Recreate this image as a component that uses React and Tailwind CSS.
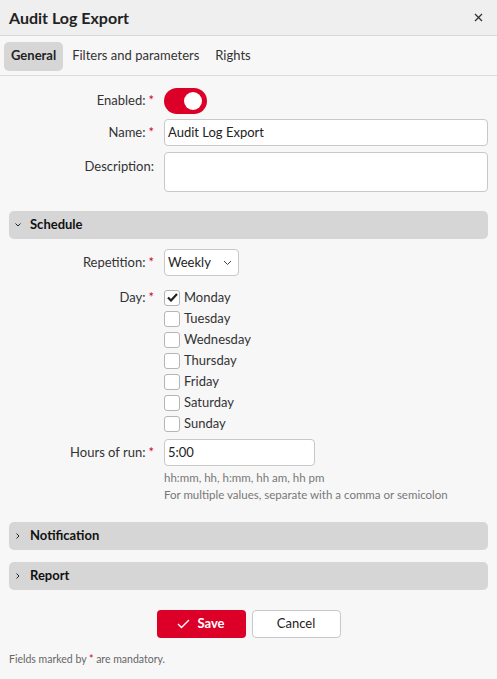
import React, { useState } from 'react'

const days = ['Monday', 'Tuesday', 'Wednesday', 'Thursday', 'Friday', 'Saturday', 'Sunday']

function Label({ text, required }) {
  return (
    <div className="w-[155px] shrink-0 text-right pr-[1px]">
      {text}
      {required && <span className="text-[#d0021b] ml-[3px]">*</span>}
    </div>
  )
}

function Chevron({ open }) {
  return (
    <svg width="8" height="8" viewBox="0 0 8 8" className="text-[#222]">
      {open ? (
        <path d="M1.5 2.5 L4 5 L6.5 2.5" fill="none" stroke="currentColor" strokeWidth="1" />
      ) : (
        <path d="M2.5 1.5 L5 4 L2.5 6.5" fill="none" stroke="currentColor" strokeWidth="1" />
      )}
    </svg>
  )
}

function Section({ title, open }) {
  return (
    <div className="mx-[9px] h-[28px] bg-[#d6d6d6] rounded-[5px] flex items-center pl-[5px] gap-[8px]">
      <Chevron open={open} />
      <span className="font-bold text-[13px] text-[#111]">{title}</span>
    </div>
  )
}

export default function App() {
  const [checked, setChecked] = useState({ Monday: true })

  return (
    <div className="w-[497px] h-[679px] bg-[#f7f7f7] text-[13px] text-[#333] font-['Lato','Liberation_Sans',sans-serif] flex flex-col">
      {/* Header */}
      <div className="h-[36px] bg-[#efefef] border-b border-[#d9d9d9] flex items-center justify-between pl-[9px] pr-[14px]">
        <span className="font-bold text-[16px] text-[#222]">Audit Log Export</span>
        <svg width="9" height="9" viewBox="0 0 9 9">
          <path d="M1 1 L8 8 M8 1 L1 8" stroke="#333" strokeWidth="1.3" />
        </svg>
      </div>

      {/* Tabs */}
      <div className="h-[40px] border-b border-[#dcdcdc] flex items-center pl-[4px] gap-[1px] pt-[1px]">
        <div className="h-[29px] px-[7px] rounded-[5px] bg-[#d6d6d6] flex items-center font-bold text-[#222]">General</div>
        <div className="h-[29px] px-[8px] flex items-center text-[#333]">Filters and parameters</div>
        <div className="h-[29px] px-[7px] flex items-center text-[#333]">Rights</div>
      </div>

      {/* General fields */}
      <div className="flex flex-col gap-[5px] pt-[12px] pr-[9px]">
        <div className="flex items-center gap-[9px]">
          <Label text="Enabled:" required />
          <div className="w-[43px] h-[26px] rounded-full bg-[#dc0028] flex items-center justify-end pr-[5px]">
            <div className="w-[18px] h-[18px] rounded-full bg-white" />
          </div>
        </div>
        <div className="flex items-center gap-[9px]">
          <Label text="Name:" required />
          <div className="flex-1 h-[27px] bg-white border border-[#c8c8c8] rounded-[4px] flex items-center px-[3px] text-[#222]">
            Audit Log Export
          </div>
        </div>
        <div className="flex items-start gap-[9px] pt-[1px]">
          <div className="pt-[5px]"><Label text="Description:" /></div>
          <div className="flex-1 h-[40px] bg-white border border-[#c8c8c8] rounded-[4px]" />
        </div>
      </div>

      {/* Schedule */}
      <div className="mt-[19px]">
        <Section title="Schedule" open />
      </div>

      <div className="flex flex-col pt-[10px] pr-[9px]">
        <div className="flex items-center gap-[9px]">
          <Label text="Repetition:" required />
          <div className="w-[75px] h-[27px] bg-white border border-[#c8c8c8] rounded-[4px] flex items-center justify-between px-[3px] pr-[6px] text-[#222]">
            <span>Weekly</span>
            <svg width="9" height="6" viewBox="0 0 9 6">
              <path d="M1 1 L4.5 4.5 L8 1" fill="none" stroke="#444" strokeWidth="1" />
            </svg>
          </div>
        </div>

        <div className="flex gap-[9px] mt-[11px]">
          <div className="leading-[21px]"><Label text="Day:" required /></div>
          <div className="flex flex-col">
            {days.map((d) => (
              <label key={d} className="h-[21px] flex items-center gap-[4px] cursor-pointer">
                <span
                  onClick={() => setChecked((c) => ({ ...c, [d]: !c[d] }))}
                  className="w-[16px] h-[16px] bg-white border border-[#b5b5b5] rounded-[3px] flex items-center justify-center"
                >
                  {checked[d] && (
                    <svg width="11" height="9" viewBox="0 0 11 9">
                      <path d="M1 4.5 L4 7.5 L10 1" fill="none" stroke="#222" strokeWidth="2.2" />
                    </svg>
                  )}
                </span>
                <span className="text-[#333]">{d}</span>
              </label>
            ))}
          </div>
        </div>

        <div className="flex items-center gap-[9px] mt-[5px]">
          <Label text="Hours of run:" required />
          <div className="w-[151px] h-[27px] bg-white border border-[#c8c8c8] rounded-[4px] flex items-center px-[3px] text-[#222]">
            5:00
          </div>
        </div>
        <div className="pl-[164px] mt-[3px] text-[11.5px] leading-[17px] text-[#777]">
          <div>hh:mm, hh, h:mm, hh am, hh pm</div>
          <div>For multiple values, separate with a comma or semicolon</div>
        </div>
      </div>

      <div className="mt-[19px] flex flex-col gap-[12px]">
        <Section title="Notification" />
        <Section title="Report" />
      </div>

      {/* Buttons */}
      <div className="flex justify-center gap-[6px] mt-[20px]">
        <button className="w-[89px] h-[28px] rounded-[4px] bg-[#dc0028] text-white font-bold flex items-center justify-center gap-[7px]">
          <svg width="13" height="10" viewBox="0 0 13 10">
            <path d="M1 5 L4.5 8.5 L12 1" fill="none" stroke="white" strokeWidth="1.4" />
          </svg>
          Save
        </button>
        <button className="w-[89px] h-[28px] rounded-[4px] bg-white border border-[#c8c8c8] text-[#222] flex items-center justify-center">
          Cancel
        </button>
      </div>

      <div className="mt-[14px] pl-[9px] text-[10.5px] text-[#666]">
        Fields marked by <span className="text-[#d0021b]">*</span> are mandatory.
      </div>
    </div>
  )
}
